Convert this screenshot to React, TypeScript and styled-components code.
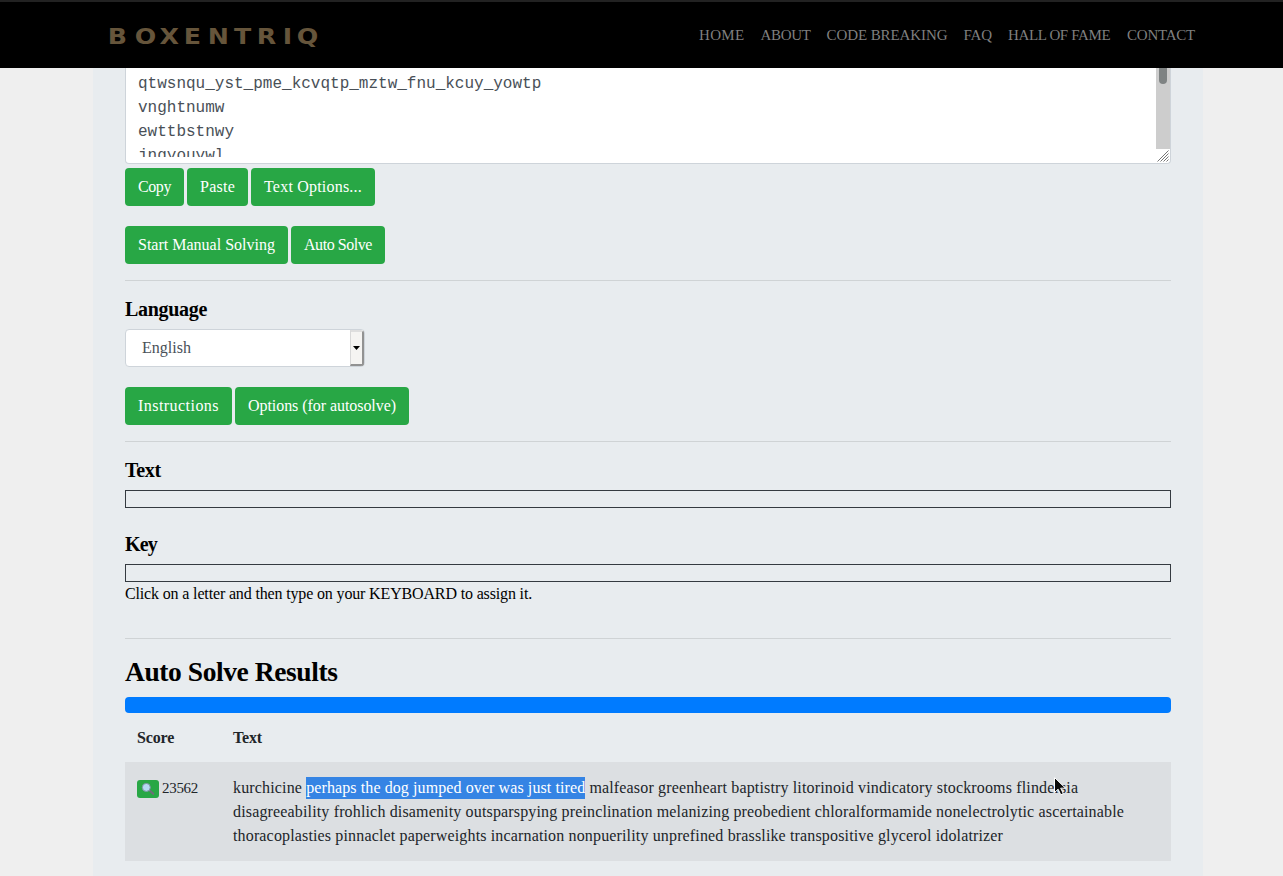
import React from "react";
import styled, { createGlobalStyle } from "styled-components";

const GlobalStyle = createGlobalStyle`
  *, *::before, *::after { box-sizing: border-box; }
  html { background: #efefef; }
  body {
    margin: 0;
    height: 876px;
    overflow: hidden;
    font: 16px/24px "Liberation Serif", serif;
    color: #212529;
  }
`;

const Header = styled.header`
  display: flex;
  justify-content: space-between;
  height: 68px;
  padding: 0 88px 0 109px;
  background: #000;
  border-top: 2px solid #222;
`;

const Brand = styled.svg`
  display: block;
  width: 212px;
  height: 32px;
  margin-top: 18px;
`;

const Nav = styled.nav`
  display: flex;
  gap: 16px;
  margin-top: 21px;
`;

const NavLink = styled.a<{ $w: number; $ls: number }>`
  width: ${(p) => p.$w}px;
  letter-spacing: ${(p) => p.$ls}px;
  font-size: 15px;
  white-space: nowrap;
  color: #7f7f7f;
`;

const Page = styled.main`
  width: 1110px;
  height: 808px;
  margin-left: 93px;
  padding: 0 32px;
  background: #e8ecef;
  overflow: hidden;
`;

const CipherBox = styled.div`
  display: flex;
  justify-content: space-between;
  height: 96px;
  background: #fff;
  border: 1px solid #ced4da;
  border-top: 0;
  border-radius: 0 0 4px 4px;
`;

const CipherText = styled.div`
  height: 89px;
  padding: 4px 0 0 12px;
  overflow: hidden;
  white-space: pre;
  font-family: "Liberation Mono", monospace;
  color: #495057;
`;

const Gutter = styled.div`
  width: 14px;
`;

const Track = styled.div`
  height: 81px;
  padding: 0 3px;
  background: #cdcdcd;
`;

const Thumb = styled.div`
  height: 16px;
  border-radius: 0 0 4px 4px;
  background: #7f8383;
`;

const Grip = styled.svg`
  display: block;
  width: 14px;
  height: 14px;
`;

const ButtonRow = styled.div<{ $top: number }>`
  display: flex;
  gap: 3px;
  margin-top: ${(p) => p.$top}px;
`;

const Button = styled.button<{ $w: number; $ls: number }>`
  width: ${(p) => p.$w}px;
  height: 38px;
  padding: 0 0 1px 13px;
  border: 0;
  border-radius: 4px;
  background: #28a745;
  color: #fff;
  font: inherit;
  text-align: left;
  white-space: nowrap;
  letter-spacing: ${(p) => p.$ls}px;
`;

const Rule = styled.hr<{ $top: number }>`
  height: 1px;
  margin: ${(p) => p.$top}px 0 0;
  border: 0;
  background: #cfd3d5;
`;

const Label = styled.h5<{ $top: number; $ls: number }>`
  margin: ${(p) => p.$top}px 0 8px;
  font-size: 20px;
  line-height: 24px;
  color: #000;
  letter-spacing: ${(p) => p.$ls}px;
`;

const Select = styled.div`
  display: flex;
  justify-content: space-between;
  width: 240px;
  height: 38px;
  padding-left: 16px;
  border: 1px solid #ced4da;
  border-radius: 4px;
  background: #fff;
  color: #495057;
  line-height: 35px;
  overflow: hidden;
`;

const SelectArrow = styled.div`
  display: flex;
  align-items: center;
  justify-content: center;
  width: 14px;
  background: #f5f4f2;
  border: solid;
  border-width: 2px 2px 2px 1px;
  border-color: #dedede #929292 #929292 #d8d8d8;
`;

const Strip = styled.div`
  height: 18px;
  border: 1px solid #343a40;
`;

const Hint = styled.p`
  margin: 0;
  color: #000;
  letter-spacing: -0.151px;
`;

const Title = styled.h3`
  margin: 16px 0 8px;
  font-size: 27.5px;
  line-height: 34px;
  color: #000;
  letter-spacing: -0.42px;
`;

const Progress = styled.div`
  height: 16px;
  border-radius: 4px;
  background: #007bff;
`;

const Row = styled.div`
  display: grid;
  grid-template-columns: 96px 1fr;
  padding: 14px 12px 13px;
  background: #dcdfe2;
`;

const HeadRow = styled(Row)`
  height: 49px;
  padding: 13px 12px 12px;
  background: none;
  font-weight: bold;
  letter-spacing: -0.17px;
`;

const Score = styled.div`
  display: flex;
  gap: 3px;
  font-size: 15px;
  letter-spacing: -0.3px;
`;

const ViewButton = styled.button`
  width: 22px;
  height: 18px;
  margin-top: 4px;
  padding: 0;
  border: 0;
  border-radius: 3px;
  background: #28a745;
`;

const Icon = styled.svg`
  display: block;
`;

const Result = styled.div`
  position: relative;
  white-space: pre;
`;

const Line = styled.div<{ $ls: number }>`
  letter-spacing: ${(p) => p.$ls}px;
`;

const Selected = styled.span`
  display: inline-block;
  height: 22px;
  line-height: 22px;
  vertical-align: top;
  margin-top: 1px;
  background: #3584e4;
  color: #fff;
  letter-spacing: 0.094px;
`;

const Pointer = styled.svg`
  position: absolute;
  left: 820px;
  top: 0;
`;

const links: [string, number, number][] = [
  ["HOME", 45.5, 0.33],
  ["ABOUT", 50, -0.34],
  ["CODE BREAKING", 121, -0.08],
  ["FAQ", 28.5, -0.13],
  ["HALL OF FAME", 103, -0.36],
  ["CONTACT", 68, -0.23],
];

const cipher = [
  "qtwsnqu_yst_pme_kcvqtp_mztw_fnu_kcuy_yowtp",
  "vnghtnumw",
  "ewttbstnwy",
  "jnqyouywl",
].join("\n");

export default function App() {
  return (
    <>
      <GlobalStyle />
      <Header>
        <Brand viewBox="0 0 212 32">
          <text
            x="-1.1 22.4 43.9 65 85.8 108.7 128.4 151 163.2"
            y="24"
            transform="scale(1.15 1)"
            fill="#66553b"
            fontFamily="DejaVu Sans, sans-serif"
            fontWeight="bold"
            fontSize="22"
          >
            BOXENTRIQ
          </text>
        </Brand>
        <Nav>
          {links.map(([text, w, ls]) => (
            <NavLink key={text} $w={w} $ls={ls}>{text}</NavLink>
          ))}
        </Nav>
      </Header>
      <Page>
        <CipherBox>
          <CipherText>{cipher}</CipherText>
          <Gutter>
            <Track><Thumb /></Track>
            <Grip viewBox="0 0 14 14">
              <path d="M1.5 12.5 12.5 1.5M4.5 12.5 12.5 4.5M7.5 12.5 12.5 7.5M10.5 12.5 12.5 10.5" stroke="#777" fill="none" />
            </Grip>
          </Gutter>
        </CipherBox>
        <ButtonRow $top={4}>
          <Button $w={59} $ls={-0.418}>Copy</Button>
          <Button $w={61} $ls={0.245}>Paste</Button>
          <Button $w={124} $ls={0.208}>Text Options...</Button>
        </ButtonRow>
        <ButtonRow $top={20}>
          <Button $w={163} $ls={0.006}>Start Manual Solving</Button>
          <Button $w={94} $ls={-0.445}>Auto Solve</Button>
        </ButtonRow>
        <Rule $top={16} />
        <Label $top={16} $ls={-0.308}>Language</Label>
        <Select>
          English
          <SelectArrow>
            <Icon width="7" height="4" viewBox="0 0 7 4"><path d="M0 0h7L3.5 4z" /></Icon>
          </SelectArrow>
        </Select>
        <ButtonRow $top={20}>
          <Button $w={107} $ls={0.454}>Instructions</Button>
          <Button $w={174} $ls={-0.057}>Options (for autosolve)</Button>
        </ButtonRow>
        <Rule $top={16} />
        <Label $top={16} $ls={-0.26}>Text</Label>
        <Strip />
        <Label $top={24} $ls={-0.8}>Key</Label>
        <Strip />
        <Hint>Click on a letter and then type on your KEYBOARD to assign it.</Hint>
        <Rule $top={32} />
        <Title>Auto Solve Results</Title>
        <Progress />
        <HeadRow>
          <span>Score</span>
          <span>Text</span>
        </HeadRow>
        <Row>
          <Score>
            <ViewButton>
              <Icon width="22" height="18" viewBox="0 0 22 18">
                <path d="m12.2 10 4 3.8" stroke="#6d6f78" strokeWidth="2.2" strokeLinecap="round" />
                <circle cx="9.3" cy="7.4" r="4" fill="#b5d9f3" stroke="#7e93a5" strokeWidth="1" />
              </Icon>
            </ViewButton>
            23562
          </Score>
          <Result>
            <Line $ls={0.155}>
              {"kurchicine "}
              <Selected>perhaps the dog jumped over was just tired</Selected>
              {" malfeasor greenheart baptistry litorinoid vindicatory stockrooms flindersia"}
            </Line>
            <Line $ls={0.154}>disagreeability frohlich disamenity outsparspying preinclination melanizing preobedient chloralformamide nonelectrolytic ascertainable</Line>
            <Line $ls={0.15}>thoracoplasties pinnaclet paperweights incarnation nonpuerility unprefined brasslike transpositive glycerol idolatrizer</Line>
            <Pointer width="15" height="21" viewBox="0 0 15 21">
              <path d="M1.5 1.5v15l3.6-3.3 2.7 5.6 2.5-1.2-2.6-5.4h4.8z" fill="#0b0b0b" stroke="#fff" />
            </Pointer>
          </Result>
        </Row>
      </Page>
    </>
  );
}
